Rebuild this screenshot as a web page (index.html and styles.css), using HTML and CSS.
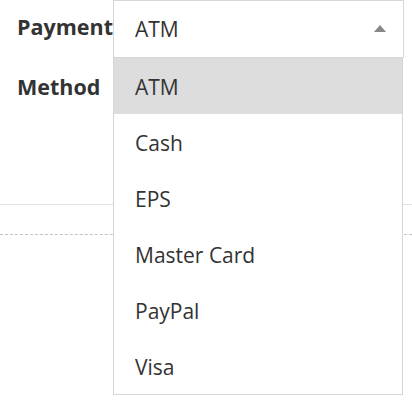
FILE: index.html
```html
<!DOCTYPE html>
<html>
<head>
<meta charset="utf-8">
<link rel="stylesheet" href="styles.css">
</head>
<body>
<div class="form-row">
  <label class="label">Payment Method</label>
  <div class="select">
    <div class="select-box"><span class="value">ATM</span><span class="arrow"></span></div>
    <ul class="dropdown">
      <li class="option active">ATM</li>
      <li class="option">Cash</li>
      <li class="option">EPS</li>
      <li class="option">Master Card</li>
      <li class="option">PayPal</li>
      <li class="option">Visa</li>
    </ul>
  </div>
</div>
<div class="rule-solid"></div>
<div class="rule-dashed"></div>
</body>
</html>
```

FILE: styles.css
```css
html, body {
  margin: 0;
  padding: 0;
  background: #fff;
}
body {
  font-family: "Open Sans", "Noto Sans", sans-serif;
  color: #333;
  width: 412px;
  height: 406px;
  overflow: hidden;
}
.form-row {
  display: flex;
  align-items: flex-start;
  height: 204px;
}
.label {
  width: 96px;
  padding-left: 17px;
  font-weight: 700;
  font-size: 21.5px;
  line-height: 60px;
  margin-top: -3px;
  color: #333;
}
.select {
  position: relative;
  width: 291px;
}
.select-box {
  display: flex;
  align-items: center;
  justify-content: space-between;
  height: 56px;
  border: 1px solid #d4d6dc;
  padding: 0 17px 0 21px;
  font-size: 21px;
  background: #fff;
}
.arrow {
  width: 0;
  height: 0;
  border-left: 6.5px solid transparent;
  border-right: 6.5px solid transparent;
  border-bottom: 7px solid #888;
  margin-top: -1px;
}
.dropdown {
  position: absolute;
  left: 0;
  top: 58px;
  width: 288px;
  margin: 0;
  padding: 0;
  list-style: none;
  border: 1px solid #d4d6dc;
  border-top: none;
  background: #fff;
  z-index: 2;
}
.option {
  height: 56px;
  line-height: 58px;
  padding-left: 21px;
  font-size: 21px;
}
.option.active {
  background: #ddd;
}
.rule-solid {
  height: 1px;
  background: #e2e2e2;
}
.rule-dashed {
  margin-top: 29px;
  border-top: 1px dashed #c4c4c4;
}
```
